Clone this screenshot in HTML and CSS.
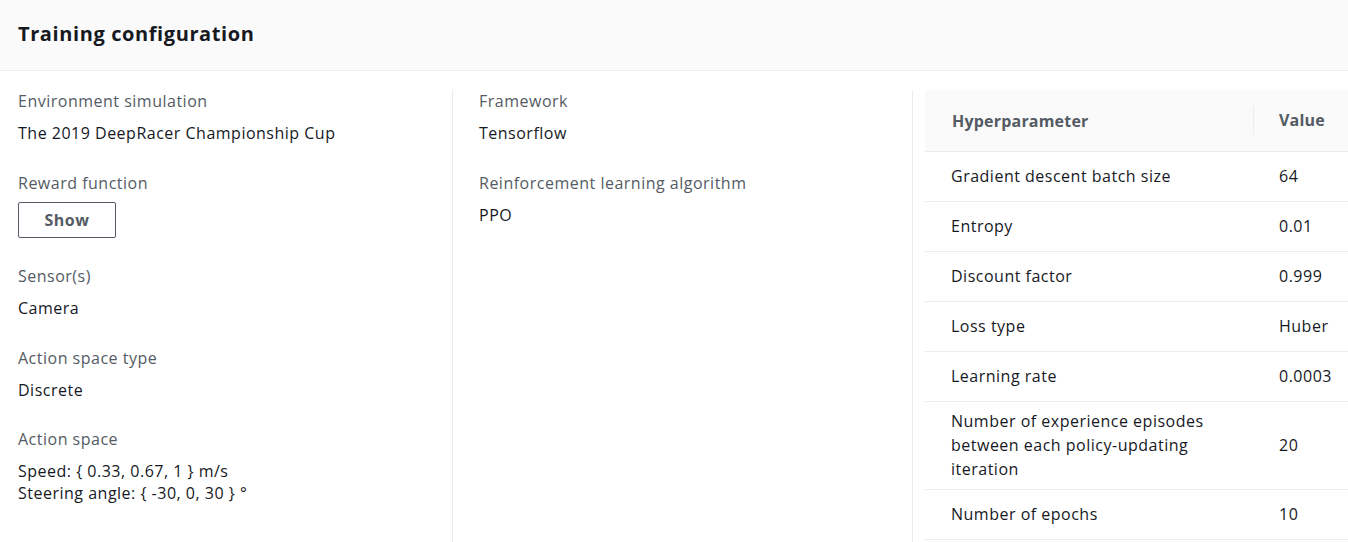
FILE: index.html
```html
<!DOCTYPE html>
<html>
<head>
<meta charset="utf-8">
<link rel="stylesheet" href="styles.css">
</head>
<body>
<div class="panel">
  <div class="panel-header"><h2 class="title">Training configuration</h2></div>
  <div class="panel-body">
    <div class="col col-1">
      <div class="field">
        <div class="label">Environment simulation</div>
        <div class="value">The 2019 DeepRacer Championship Cup</div>
      </div>
      <div class="field">
        <div class="label">Reward function</div>
        <button class="btn">Show</button>
      </div>
      <div class="field">
        <div class="label">Sensor(s)</div>
        <div class="value">Camera</div>
      </div>
      <div class="field">
        <div class="label">Action space type</div>
        <div class="value">Discrete</div>
      </div>
      <div class="field">
        <div class="label">Action space</div>
        <div class="value">Speed: { 0.33, 0.67, 1 } m/s<br>Steering angle: { -30, 0, 30 } °</div>
      </div>
    </div>
    <div class="col col-2">
      <div class="field">
        <div class="label">Framework</div>
        <div class="value">Tensorflow</div>
      </div>
      <div class="field">
        <div class="label">Reinforcement learning algorithm</div>
        <div class="value">PPO</div>
      </div>
    </div>
    <div class="col col-3">
      <table class="hp">
        <thead>
          <tr><th class="c-name"><span class="th-in">Hyperparameter</span></th><th class="c-val"><span class="th-in">Value</span></th></tr>
        </thead>
        <tbody>
          <tr><td>Gradient descent batch size</td><td class="v">64</td></tr>
          <tr><td>Entropy</td><td class="v">0.01</td></tr>
          <tr><td>Discount factor</td><td class="v">0.999</td></tr>
          <tr><td>Loss type</td><td class="v">Huber</td></tr>
          <tr><td>Learning rate</td><td class="v">0.0003</td></tr>
          <tr><td>Number of experience episodes between each policy-updating iteration</td><td class="v">20</td></tr>
          <tr><td>Number of epochs</td><td class="v">10</td></tr>
        </tbody>
      </table>
    </div>
  </div>
</div>
</body>
</html>
```
FILE: styles.css
```css
html, body {
  margin: 0;
  padding: 0;
  background: #ffffff;
}
body {
  font-family: "Open Sans", "Noto Sans", sans-serif;
  font-size: 16px;
  letter-spacing: 0.5px;
  color: #16191f;
}
.panel-header {
  background: #fafafa;
  border-bottom: 1px solid #eaeded;
  height: 71px;
  box-sizing: border-box;
  padding: 21px 18px 0;
}
.title {
  margin: 0;
  font-size: 20px;
  line-height: 26px;
  font-weight: 700;
  letter-spacing: 0.6px;
  color: #16191f;
}
.panel-body {
  display: grid;
  grid-template-columns: 453px 460px 1fr;
  padding-top: 19px;
}
.col {
  min-height: 452px;
}
.col-1 {
  padding-left: 18px;
  border-right: 1px solid #eaeded;
}
.col-2 {
  padding-left: 26px;
  border-right: 1px solid #eaeded;
}
.col-3 {
  padding-left: 12px;
}
.field {
  margin-bottom: 27.5px;
}
.label {
  color: #545b64;
  line-height: 22px;
  margin-bottom: 10px;
}
.value {
  line-height: 22px;
}
.btn {
  display: block;
  margin-top: -2px;
  width: 98px;
  height: 36px;
  box-sizing: border-box;
  background: #ffffff;
  border: 1px solid #545b64;
  border-radius: 2px;
  font-family: inherit;
  font-size: 16px;
  letter-spacing: 0.5px;
  font-weight: 700;
  color: #545b64;
  padding: 0;
  margin-bottom: 0;
}
.hp {
  width: 100%;
  table-layout: fixed;
  border-collapse: collapse;
  border-spacing: 0;
}
.hp th {
  background: #fafafa;
  height: 61px;
  padding: 0;
  border-bottom: 1px solid #eaeded;
  text-align: left;
  font-weight: 700;
  letter-spacing: 0.2px;
  color: #545b64;
  line-height: 22px;
}
.hp .c-name {
  width: 328px;
}
.th-in {
  display: block;
  padding-left: 27px;
}
.hp .c-val .th-in {
  border-left: 1px solid #eaeded;
  padding-left: 25px;
  line-height: 29px;
}
.hp td {
  height: 50px;
  box-sizing: border-box;
  padding: 7px 26px 8px 26px;
  line-height: 24px;
  border-bottom: 1px solid #eaeded;
  vertical-align: middle;
}
.hp td.v {
  padding-left: 26px;
  padding-right: 0;
}
```
